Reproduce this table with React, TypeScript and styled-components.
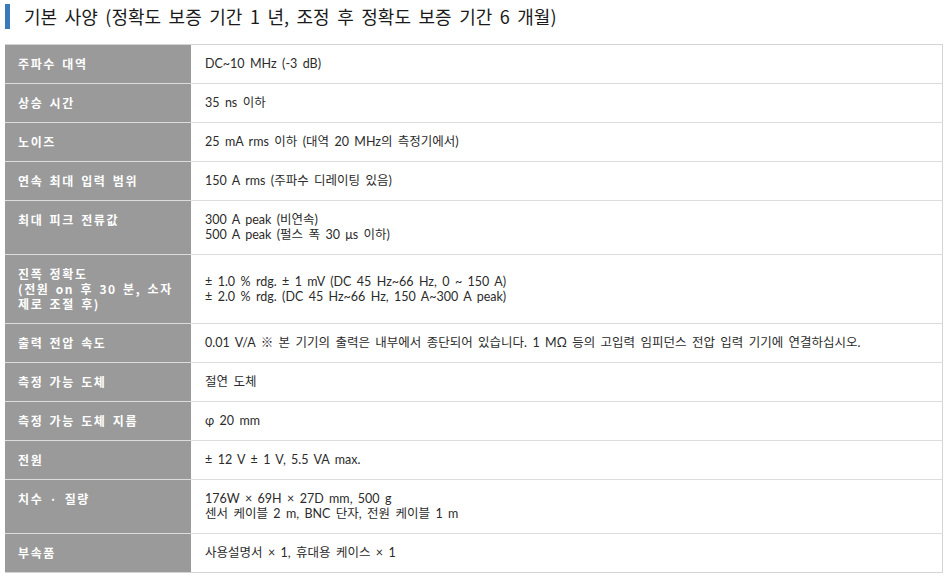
import React from "react";
import styled, { createGlobalStyle } from "styled-components";

const GlobalStyle = createGlobalStyle`
    body {
        margin: 0;
        background: #ffffff;
        font-family: "Noto Sans CJK KR", sans-serif;
    }
`;

const Page = styled.div`
    width: 950px;
    height: 580px;
    padding: 4px 7px 0 5px;
    box-sizing: border-box;
    display: flex;
    flex-direction: column;
    gap: 15px;
`;

const TitleRow = styled.div`
    display: flex;
    align-items: center;
    gap: 14px;
    height: 25px;
`;

const TitleBar = styled.div`
    width: 5px;
    height: 25px;
    background-color: #3a7ab8;
`;

const Title = styled.h2`
    margin: 0;
    font-family: "Noto Sans CJK KR", sans-serif;
    font-size: 18px;
    font-weight: 400;
    color: #1a1a1a;
    word-spacing: 3.5px;
    line-height: 25px;
`;

const Table = styled.table`
    width: 938px;
    border-collapse: collapse;
    border-top: 1px solid #d4d4d4;
    border-right: 1px solid #d4d4d4;
    border-bottom: 1px solid #d4d4d4;
`;

const Row = styled.tr`
    border-bottom: 1px solid #dcdcdc;

    &:last-child {
        border-bottom: none;
    }
`;

const Head = styled.th`
    width: 186px;
    box-sizing: border-box;
    padding: 11px 10px 12px 13px;
    background-color: #9a9a9a;
    color: #ffffff;
    text-align: left;
    vertical-align: top;
    font-family: "Noto Sans CJK KR", sans-serif;
    font-size: 12px;
    font-weight: 700;
    line-height: 15px;
    letter-spacing: 1.6px;
    word-spacing: 2px;
    white-space: pre-line;
`;

const Cell = styled.td`
    padding: 11px 10px 12px 14px;
    color: #2b2b2b;
    vertical-align: middle;
    font-family: Lato, "Noto Sans CJK KR", sans-serif;
    font-size: 12.5px;
    line-height: 15px;
    word-spacing: 2.2px;
    white-space: pre-line;
`;

type Spec = {
    label: string;
    value: string;
};

const specs: Spec[] = [
    { label: "주파수 대역", value: "DC~10 MHz (-3 dB)" },
    { label: "상승 시간", value: "35 ns 이하" },
    { label: "노이즈", value: "25 mA rms 이하 (대역 20 MHz의 측정기에서)" },
    { label: "연속 최대 입력 범위", value: "150 A rms (주파수 디레이팅 있음)" },
    {
        label: "최대 피크 전류값",
        value: "300 A peak (비연속)\n500 A peak (펄스 폭 30 μs 이하)",
    },
    {
        label: "진폭 정확도\n(전원 on 후 30 분, 소자\n제로 조절 후)",
        value:
            "± 1.0 % rdg. ± 1 mV (DC 45 Hz~66 Hz, 0 ~ 150 A)\n± 2.0 % rdg. (DC 45 Hz~66 Hz, 150 A~300 A peak)",
    },
    {
        label: "출력 전압 속도",
        value:
            "0.01 V/A ※ 본 기기의 출력은 내부에서 종단되어 있습니다. 1 MΩ 등의 고입력 임피던스 전압 입력 기기에 연결하십시오.",
    },
    { label: "측정 가능 도체", value: "절연 도체" },
    { label: "측정 가능 도체 지름", value: "φ 20 mm" },
    { label: "전원", value: "± 12 V ± 1 V, 5.5 VA max." },
    {
        label: "치수 · 질량",
        value: "176W × 69H × 27D mm, 500 g\n센서 케이블 2 m, BNC 단자, 전원 케이블 1 m",
    },
    { label: "부속품", value: "사용설명서 × 1, 휴대용 케이스 × 1" },
];

const App = () => {
    return (
        <>
            <GlobalStyle />
            <Page>
                <TitleRow>
                    <TitleBar />
                    <Title>기본 사양 (정확도 보증 기간 1 년, 조정 후 정확도 보증 기간 6 개월)</Title>
                </TitleRow>
                <Table>
                    <tbody>
                        {specs.map((spec) => (
                            <Row key={spec.label}>
                                <Head>{spec.label}</Head>
                                <Cell>{spec.value}</Cell>
                            </Row>
                        ))}
                    </tbody>
                </Table>
            </Page>
        </>
    );
};

export default App;
